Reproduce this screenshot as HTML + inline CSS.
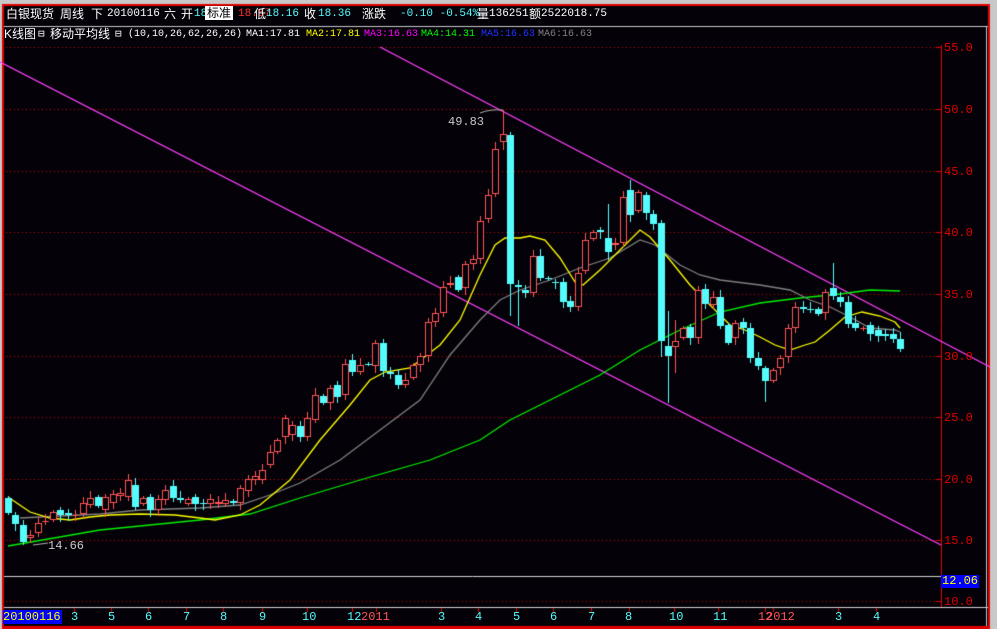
<!DOCTYPE html>
<html><head><meta charset="utf-8"><style>
html,body{margin:0;padding:0;background:#040208;width:997px;height:629px;overflow:hidden}
#c{position:absolute;left:0;top:0}
.t{position:absolute;font-family:"Liberation Mono","WenQuanYi Zen Hei",monospace;font-size:11px;line-height:14px;white-space:pre;color:#e0e0e0}
.t2{font-size:10px}
.s{font-family:"Liberation Sans","WenQuanYi Zen Hei",sans-serif;font-size:12px}
.r{color:#ff3030}.cy{color:#54fcfc}.y{color:#ffff00}.w{color:#fff}.m{color:#ff00ff}.g{color:#00ff00}.b{color:#2030ff}.gr{color:#808080}
.ax{position:absolute;font-family:"Liberation Mono",monospace;font-size:12px;color:#e00000;line-height:12px}
.mo{position:absolute;top:611px;font-family:"Liberation Mono",monospace;font-size:12px;color:#54fcfc;line-height:12px}
</style></head><body>
<canvas id="c" width="997" height="629"></canvas>
<div class="t s w" style="left:6px;top:7px">白银现货</div>
<div class="t s w" style="left:60px;top:7px">周线</div>
<div class="t s w" style="left:91px;top:7px">下</div>
<div class="t w" style="left:107px;top:7px">20100116</div>
<div class="t s w" style="left:164px;top:7px">六</div>
<div class="t s w" style="left:181px;top:7px">开</div>
<div class="t cy" style="left:194px;top:7px">18</div>
<div class="t s" style="left:205px;top:6px;background:#fff;color:#000;padding:0 2px">标准</div>
<div class="t r" style="left:238px;top:7px">18.87</div>
<div class="t s w" style="left:254px;top:7px">低</div>
<div class="t cy" style="left:266px;top:7px">18.16</div>
<div class="t s w" style="left:304px;top:7px">收</div>
<div class="t cy" style="left:318px;top:7px">18.36</div>
<div class="t s w" style="left:362px;top:7px">涨跌</div>
<div class="t cy" style="left:400px;top:7px">-0.10 -0.54%</div>
<div class="t s w" style="left:477px;top:7px">量</div>
<div class="t w" style="left:489px;top:7px">136251</div>
<div class="t s w" style="left:529px;top:7px">额</div>
<div class="t w" style="left:541px;top:7px">2522018.75</div>
<div class="t s w" style="left:4px;top:27px">K线图</div>
<div class="t w" style="left:38px;top:28px">⊟</div>
<div class="t s w" style="left:50px;top:27px">移动平均线</div>
<div class="t w" style="left:115px;top:28px">⊟</div>
<div class="t t2 w" style="left:128px;top:28px">(10,10,26,62,26,26)</div>
<div class="t t2 w" style="left:246px;top:28px">MA1:17.81</div>
<div class="t t2 y" style="left:306px;top:28px">MA2:17.81</div>
<div class="t t2 m" style="left:364px;top:28px">MA3:16.63</div>
<div class="t t2 g" style="left:421px;top:28px">MA4:14.31</div>
<div class="t t2 b" style="left:481px;top:28px">MA5:16.63</div>
<div class="t t2 gr" style="left:538px;top:28px">MA6:16.63</div>
<div class="ax" style="left:944px;top:42px">55.0</div>
<div class="ax" style="left:944px;top:104px">50.0</div>
<div class="ax" style="left:944px;top:166px">45.0</div>
<div class="ax" style="left:944px;top:227px">40.0</div>
<div class="ax" style="left:944px;top:289px">35.0</div>
<div class="ax" style="left:944px;top:351px">30.0</div>
<div class="ax" style="left:944px;top:412px">25.0</div>
<div class="ax" style="left:944px;top:474px">20.0</div>
<div class="ax" style="left:944px;top:535px">15.0</div>
<div class="ax" style="left:944px;top:596px">10.0</div>
<div class="t y" style="left:941px;top:575px;background:#0000ff;padding:0 1px;line-height:13px;font-size:12px">12.06</div>
<div class="t y" style="left:3px;top:610px;background:#0000ff;line-height:14px;padding-right:1px;font-size:12px">20100116</div>
<div class="t" style="left:448px;top:115px;color:#c8c8c8;font-size:12px">49.83</div>
<div class="t" style="left:48px;top:539px;color:#c8c8c8;font-size:12px">14.66</div>
<div class="mo" style="left:71px">3</div><div class="mo" style="left:108px">5</div><div class="mo" style="left:145px">6</div>
<div class="mo" style="left:183px">7</div><div class="mo" style="left:220px">8</div><div class="mo" style="left:259px">9</div>
<div class="mo" style="left:302px">10</div><div class="mo" style="left:347px">12</div><div class="mo" style="left:361px;color:#ff5555">2011</div>
<div class="mo" style="left:438px">3</div><div class="mo" style="left:475px">4</div><div class="mo" style="left:513px">5</div>
<div class="mo" style="left:550px">6</div><div class="mo" style="left:588px">7</div><div class="mo" style="left:625px">8</div>
<div class="mo" style="left:669px">10</div><div class="mo" style="left:713px">11</div>
<div class="mo" style="left:758px;color:#ff5555">12</div><div class="mo" style="left:766px;color:#ff5555">2012</div>
<div class="mo" style="left:835px">3</div><div class="mo" style="left:873px">4</div>
<script>
var c=document.getElementById('c').getContext('2d');
function ln(x1,y1,x2,y2,col){c.strokeStyle=col;c.lineWidth=1;c.beginPath();c.moveTo(x1,y1);c.lineTo(x2,y2);c.stroke();}
c.fillStyle='#c8c8c8';c.fillRect(0,0,997,4);c.fillRect(990,0,7,629);c.fillRect(0,0,2,629);
c.fillStyle='#e00000';c.fillRect(2,4,988,2);c.fillRect(2,4,2,625);c.fillRect(988,4,2,625);c.fillRect(2,626,988,3);
ln(4,26.5,988,26.5,'#c8c8c8');
ln(986.5,26,986.5,626,'#c8c8c8');
c.setLineDash([1,3]);
[47,109,171,232,294,356,417,479,540,601].forEach(function(y){ln(6,y+.5,941,y+.5,'#d00000');});
c.setLineDash([]);
ln(941.5,45,941.5,608,'#e00000');
[47,109,171,232,294,356,417,479,540,601].forEach(function(y){ln(936,y+.5,941,y+.5,'#e00000');});
ln(4,576.5,941,576.5,'#d0d0d0');
ln(4,607.5,988,607.5,'#d0d0d0');
[74,111,148,186,223,262,307,352,376,441,478,516,553,591,629,674,718,765,773,838,876].forEach(function(x){ln(x+.5,608,x+.5,612,'#e00000');});
function poly(p,col,w){c.strokeStyle=col;c.lineWidth=w||1.3;c.beginPath();c.moveTo(p[0],p[1]);for(var i=2;i<p.length;i+=2)c.lineTo(p[i],p[i+1]);c.stroke();}
poly([380,47,990,367],'#ff40ff');
poly([0,62,941,545],'#ff40ff');
poly([8,546,100,530,200,520,250,514,300,498,360,480,430,460,480,440,510,420,550,400,600,375,640,350,680,330,720,312,760,303,800,298,840,294,870,290,900,291],'#00f000');
poly([20,518,100,514,140,510,200,508,240,505,270,495,300,483,340,460,380,430,420,400,450,355,480,320,500,300,520,290,550,280,580,268,610,258,640,240,655,245,680,265,700,275,720,280,760,285,790,290,810,300,830,307,850,317,870,328,895,330,900,332],'#808080');
poly([8,497,30,512,50,518,70,520,90,517,110,515,140,514,175,515,200,518,215,520,240,515,260,505,290,480,320,440,350,405,370,380,385,372,410,368,440,345,460,320,480,275,495,245,505,238,520,238,530,236,545,240,560,258,575,282,583,285,600,270,620,250,640,230,650,237,670,260,690,285,710,305,730,325,745,330,760,337,775,345,790,350,805,345,815,342,830,330,845,317,862,312,880,316,895,322,900,328],'#ffff00');
c.strokeStyle='#b0b0b0';c.lineWidth=1;c.beginPath();c.moveTo(480,113);c.quadraticCurveTo(490,109,503,110);c.stroke();
ln(33,545,48,543,'#b0b0b0');
var K=[[8,498,513],[15,515,524],[23,525,542],[30,538,535],[38,533,523],[45,522,521],[53,520,512],[60,510,515],[68,513,515],[75,516,515],[83,514,503],[90,505,498],[98,497,506],[105,510,497],[113,503,494],[120,496,493],[128,497,480],[135,485,507],[143,504,498],[150,497,510],[158,510,499],[165,500,490],[173,486,498],[180,498,500],[188,504,499],[195,497,504],[203,503,504],[210,504,499],[218,504,502],[225,504,500],[233,501,503],[240,503,488],[248,491,479],[255,480,476],[262,480,470],[270,465,452],[277,452,440],[285,437,418],[292,435,425],[300,426,437],[307,437,418],[315,420,395],[323,396,403],[330,403,388],[337,385,397],[345,395,364],[352,360,372],[360,372,365],[368,364,364],[375,366,343],[383,343,371],[390,372,374],[398,375,385],[405,385,380],[413,378,365],[420,365,356],[428,356,322],[435,322,313],[443,313,287],[450,285,283],[458,277,290],[465,288,264],[473,264,259],[480,259,221],[488,219,195],[495,194,149],[503,142,134],[510,135,284],[518,285,287],[525,290,293],[533,293,256],[540,256,278],[548,278,279],[555,282,282],[563,282,302],[570,301,307],[578,307,273],[585,271,240],[593,239,232],[600,230,232],[608,238,252],[615,245,243],[623,243,197],[630,190,215],[638,211,192],[646,195,213],[653,214,224],[661,223,341],[668,346,356],[675,347,341],[683,338,328],[690,327,338],[698,338,290],[705,289,304],[713,305,297],[720,297,326],[728,325,343],[735,338,323],[743,322,328],[750,328,358],[758,358,366],[765,368,381],[773,381,370],[780,368,358],[788,357,328],[795,328,307],[803,307,309],[810,309,310],[818,309,314],[825,313,292],[833,288,296],[840,297,302],[848,302,324],[855,323,328],[863,329,328],[870,325,334],[878,330,336],[885,334,336],[893,334,339],[900,339,349]];
var OV={503:[110,150],510:[132,316],518:[280,326],608:[204,260],630:[180,222],661:[220,357],668:[311,403],675:[320,373],765:[366,402],833:[263,300],23:[520,545]};
K.forEach(function(k,i){
 var x=k[0],o=k[1],cl=k[2],top=Math.min(o,cl),bot=Math.max(o,cl);
 var hi=top-(2+(i*7)%6),lo=bot+(2+(i*5)%6);
 if(OV[x]){hi=OV[x][0];lo=OV[x][1];}
 var up=cl<o;
 var col=up?'#ff5454':'#54fcfc';
 c.fillStyle=col;
 c.fillRect(x,hi,1,lo-hi);
 if(top===bot){c.fillRect(x-3,top,7,1);return;}
 if(up){c.fillStyle='#040208';c.fillRect(x-3,top,7,bot-top);c.strokeStyle=col;c.lineWidth=1;c.strokeRect(x-2.5,top+.5,6,bot-top-1);}
 else{c.fillRect(x-3,top,7,bot-top);}
});
</script>
</body></html>
